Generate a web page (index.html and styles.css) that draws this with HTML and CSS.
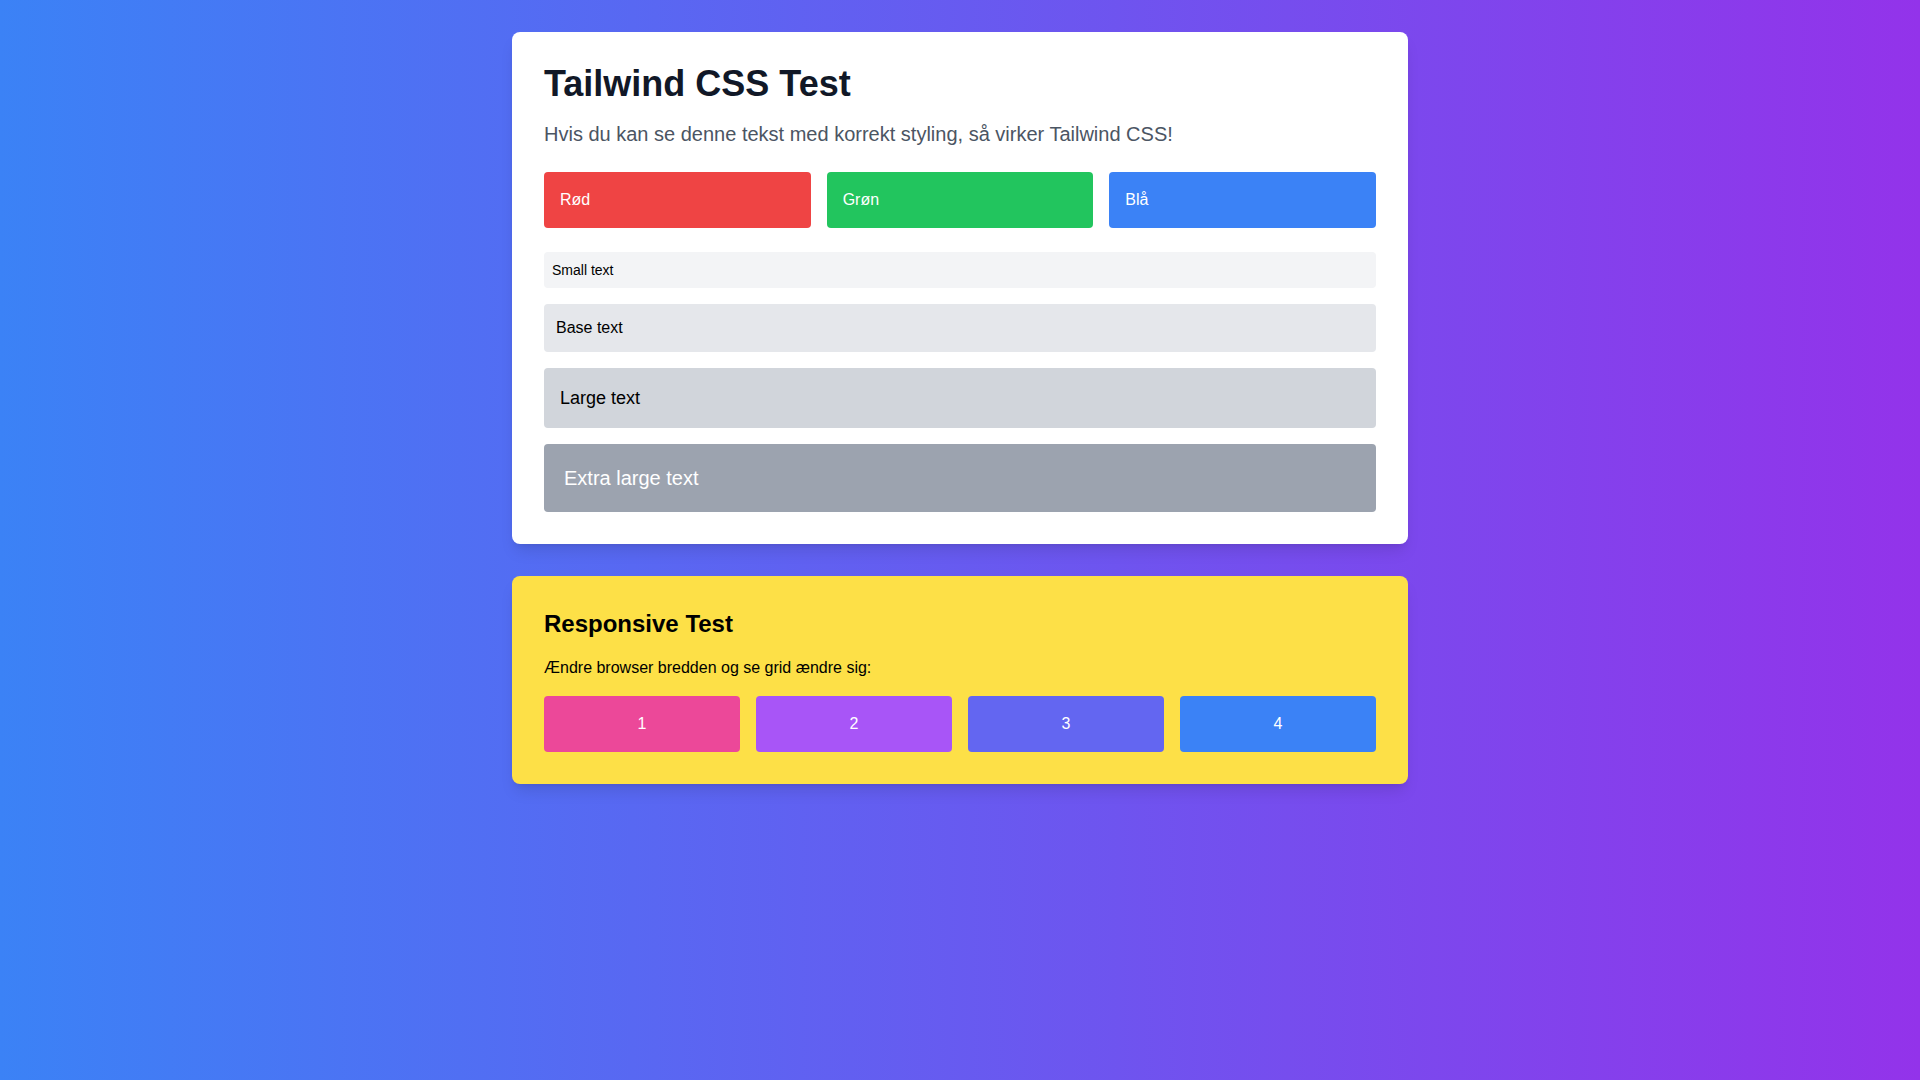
FILE: index.html
```html
<!DOCTYPE html>
<html lang="da">
<head>
<meta charset="utf-8">
<title>Tailwind CSS Test</title>
<link rel="stylesheet" href="styles.css">
</head>
<body>
<div class="page">
  <div class="container">
    <div class="card">
      <h1 class="title">Tailwind CSS Test</h1>
      <p class="subtitle">Hvis du kan se denne tekst med korrekt styling, så virker Tailwind CSS!</p>
      <div class="color-grid">
        <div class="color-box red">Rød</div>
        <div class="color-box green">Grøn</div>
        <div class="color-box blue">Blå</div>
      </div>
      <div class="sizes">
        <div class="size size-sm">Small text</div>
        <div class="size size-base">Base text</div>
        <div class="size size-lg">Large text</div>
        <div class="size size-xl">Extra large text</div>
      </div>
    </div>
    <div class="card yellow">
      <h2 class="subtitle2">Responsive Test</h2>
      <p class="desc">Ændre browser bredden og se grid ændre sig:</p>
      <div class="num-grid">
        <div class="num pink">1</div>
        <div class="num purple">2</div>
        <div class="num indigo">3</div>
        <div class="num blue">4</div>
      </div>
    </div>
  </div>
</div>
</body>
</html>
```
FILE: styles.css
```css
* { box-sizing: border-box; }
html, body { margin: 0; padding: 0; }
body {
  font-family: "Liberation Sans", Arial, sans-serif;
  font-size: 16px;
  line-height: 24px;
  color: #000;
}
.page {
  min-height: 100vh;
  background: linear-gradient(to right, #3b82f6, #9333ea);
  padding: 32px;
}
.container {
  max-width: 896px;
  margin: 0 auto;
  display: flex;
  flex-direction: column;
  gap: 32px;
}
.card {
  background: #fff;
  border-radius: 8px;
  padding: 32px;
  box-shadow: 0 10px 15px -3px rgba(0,0,0,0.1), 0 4px 6px -4px rgba(0,0,0,0.1);
}
.card.yellow { background: #fde047; }
.title {
  margin: 0 0 16px;
  font-size: 36px;
  line-height: 40px;
  font-weight: 700;
  color: #111827;
}
.subtitle {
  margin: 0 0 24px;
  font-size: 20px;
  line-height: 28px;
  color: #4b5563;
}
.color-grid {
  display: grid;
  grid-template-columns: repeat(3, 1fr);
  gap: 16px;
  margin-bottom: 24px;
}
.color-box {
  padding: 16px;
  border-radius: 4px;
  color: #fff;
}
.red { background: #ef4444; }
.green { background: #22c55e; }
.blue { background: #3b82f6; }
.sizes {
  display: flex;
  flex-direction: column;
  gap: 16px;
}
.size { border-radius: 4px; }
.size-sm { font-size: 14px; line-height: 20px; padding: 8px; background: #f3f4f6; }
.size-base { font-size: 16px; line-height: 24px; padding: 12px; background: #e5e7eb; }
.size-lg { font-size: 18px; line-height: 28px; padding: 16px; background: #d1d5db; }
.size-xl { font-size: 20px; line-height: 28px; padding: 20px; background: #9ca3af; color: #fff; }
.subtitle2 {
  margin: 0 0 16px;
  font-size: 24px;
  line-height: 32px;
  font-weight: 700;
}
.desc { margin: 0 0 16px; }
.num-grid {
  display: grid;
  grid-template-columns: repeat(4, 1fr);
  gap: 16px;
}
.num {
  padding: 16px;
  border-radius: 4px;
  color: #fff;
  text-align: center;
}
.pink { background: #ec4899; }
.purple { background: #a855f7; }
.indigo { background: #6366f1; }
```
